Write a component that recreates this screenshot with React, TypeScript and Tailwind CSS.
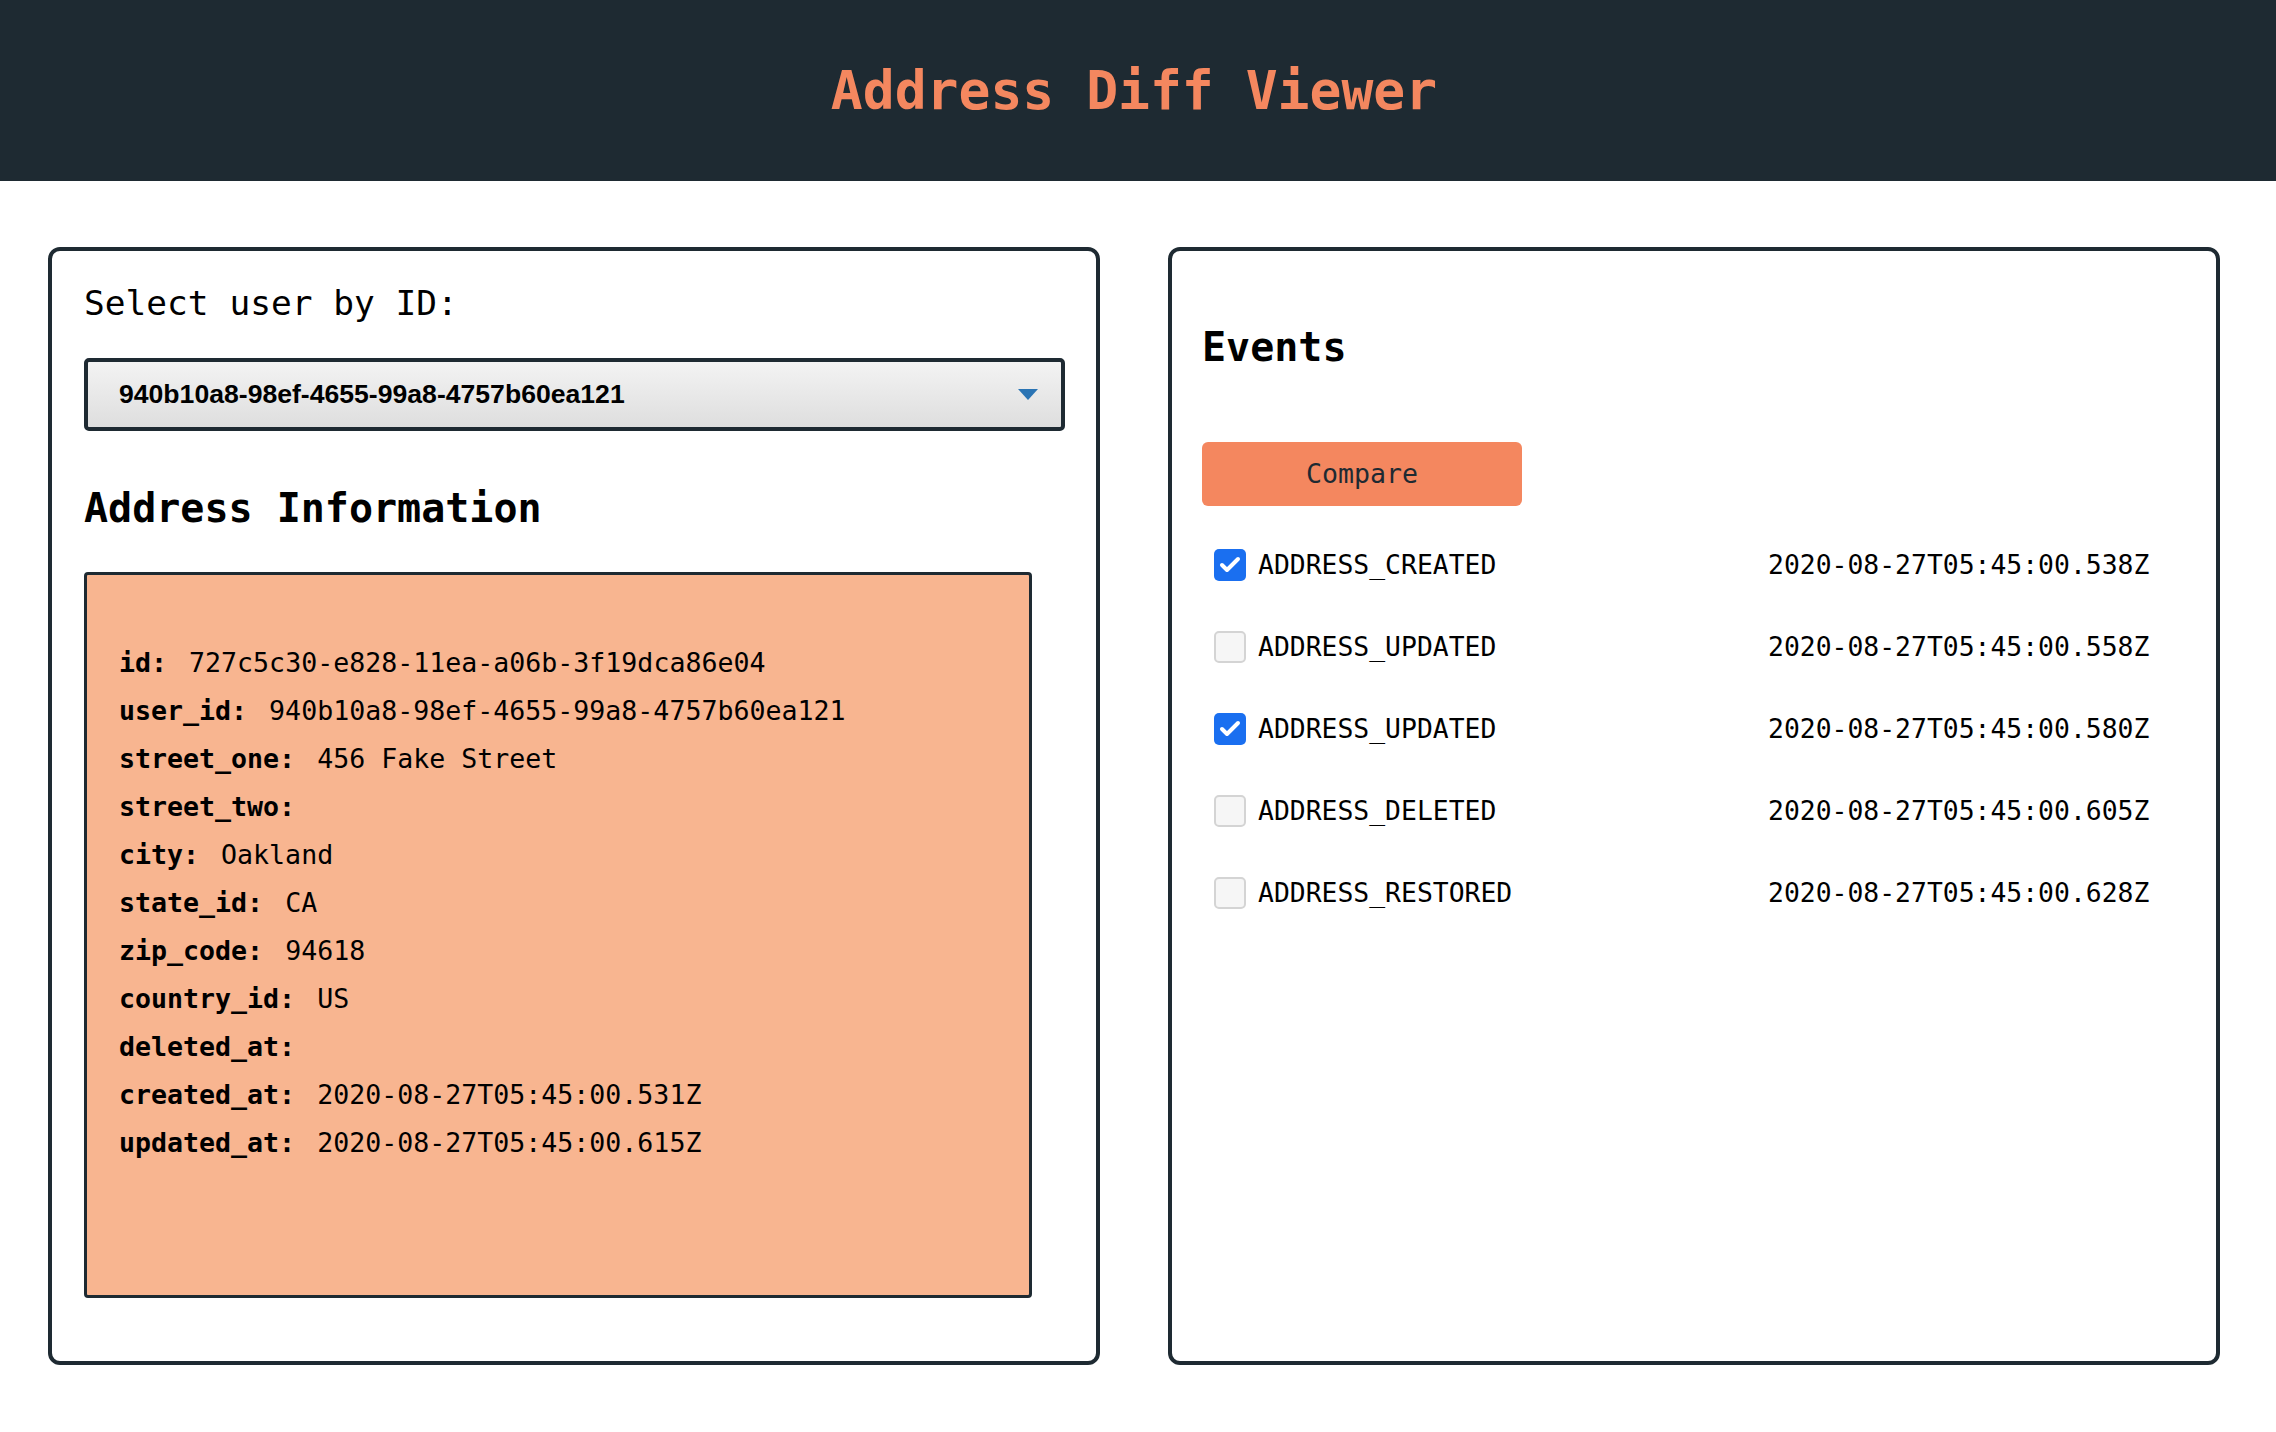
import { Check } from "lucide-react";

const address: [string, string][] = [
  ["id", "727c5c30-e828-11ea-a06b-3f19dca86e04"],
  ["user_id", "940b10a8-98ef-4655-99a8-4757b60ea121"],
  ["street_one", "456 Fake Street"],
  ["street_two", ""],
  ["city", "Oakland"],
  ["state_id", "CA"],
  ["zip_code", "94618"],
  ["country_id", "US"],
  ["deleted_at", ""],
  ["created_at", "2020-08-27T05:45:00.531Z"],
  ["updated_at", "2020-08-27T05:45:00.615Z"],
];

const events = [
  { type: "ADDRESS_CREATED", at: "2020-08-27T05:45:00.538Z", checked: true },
  { type: "ADDRESS_UPDATED", at: "2020-08-27T05:45:00.558Z", checked: false },
  { type: "ADDRESS_UPDATED", at: "2020-08-27T05:45:00.580Z", checked: true },
  { type: "ADDRESS_DELETED", at: "2020-08-27T05:45:00.605Z", checked: false },
  { type: "ADDRESS_RESTORED", at: "2020-08-27T05:45:00.628Z", checked: false },
];

function Checkbox({ checked }: { checked: boolean }) {
  if (checked) {
    return (
      <span className="flex h-[32px] w-[32px] items-center justify-center rounded-[5px] bg-[#1a6ff0]">
        <Check className="h-[24px] w-[24px] text-white" strokeWidth={4} />
      </span>
    );
  }
  return <span className="block h-[32px] w-[32px] rounded-[5px] border-2 border-[#d4d4d4] bg-[#f6f6f6]" />;
}

export default function App() {
  return (
    <div className="min-h-[1432px] bg-white font-['DejaVu_Sans_Mono',monospace] text-black">
      {/* header */}
      <header className="flex h-[181px] items-center justify-center bg-[#1e2a32] pr-[8px]">
        <h1 className="text-[53px] font-bold leading-none text-[#f4875f]">Address Diff Viewer</h1>
      </header>

      <main className="flex gap-[68px] pl-[48px] pt-[66px]">
        {/* user + address */}
        <section className="h-[1118px] w-[1052px] rounded-[12px] border-4 border-[#1e2a32] px-[32px] pt-[32px]">
          <label className="block text-[34.5px] leading-[40px]">Select user by ID:</label>
          <div className="mt-[35px] flex h-[73px] w-[981px] items-center justify-between rounded-[5px] border-4 border-[#1e2a32] bg-gradient-to-b from-[#f3f3f3] to-[#dedede] pl-[31px] pr-[23px]">
            <span className="font-['Liberation_Sans',Arial,sans-serif] text-[26.6px] font-bold">
              940b10a8-98ef-4655-99a8-4757b60ea121
            </span>
            <svg width="20" height="11" viewBox="0 0 20 11">
              <path d="M0 0 H20 L10 11 Z" fill="#2a74b4" />
            </svg>
          </div>

          <h2 className="mt-[53px] text-[40px] font-bold leading-[48px]">Address Information</h2>

          <div className="mt-[40px] h-[726px] w-[948px] rounded-[4px] border-[3px] border-[#1e2a32] bg-[#f8b590] px-[32px] pt-[64px]">
            {address.map(([k, v]) => (
              <div key={k} className="text-[26.6px] leading-[48px]">
                <strong className="mr-[6px] font-bold">{k}:</strong> {v}
              </div>
            ))}
          </div>
        </section>

        {/* events */}
        <section className="h-[1118px] w-[1052px] rounded-[12px] border-4 border-[#1e2a32] px-[30px] pt-[72px]">
          <h2 className="text-[40px] font-bold leading-[48px]">Events</h2>
          <button className="mt-[71px] flex h-[64px] w-[320px] items-center justify-center rounded-[6px] bg-[#f4875f] text-[26.6px] text-[#1e2a32]">
            Compare
          </button>

          <div className="mt-[18px]">
            {events.map((e) => (
              <div key={e.at} className="flex h-[82px] items-center pl-[12px] text-[26.4px]">
                <Checkbox checked={e.checked} />
                <span className="ml-[12px] w-[510px]">{e.type}</span>
                <span>{e.at}</span>
              </div>
            ))}
          </div>
        </section>
      </main>
    </div>
  );
}
